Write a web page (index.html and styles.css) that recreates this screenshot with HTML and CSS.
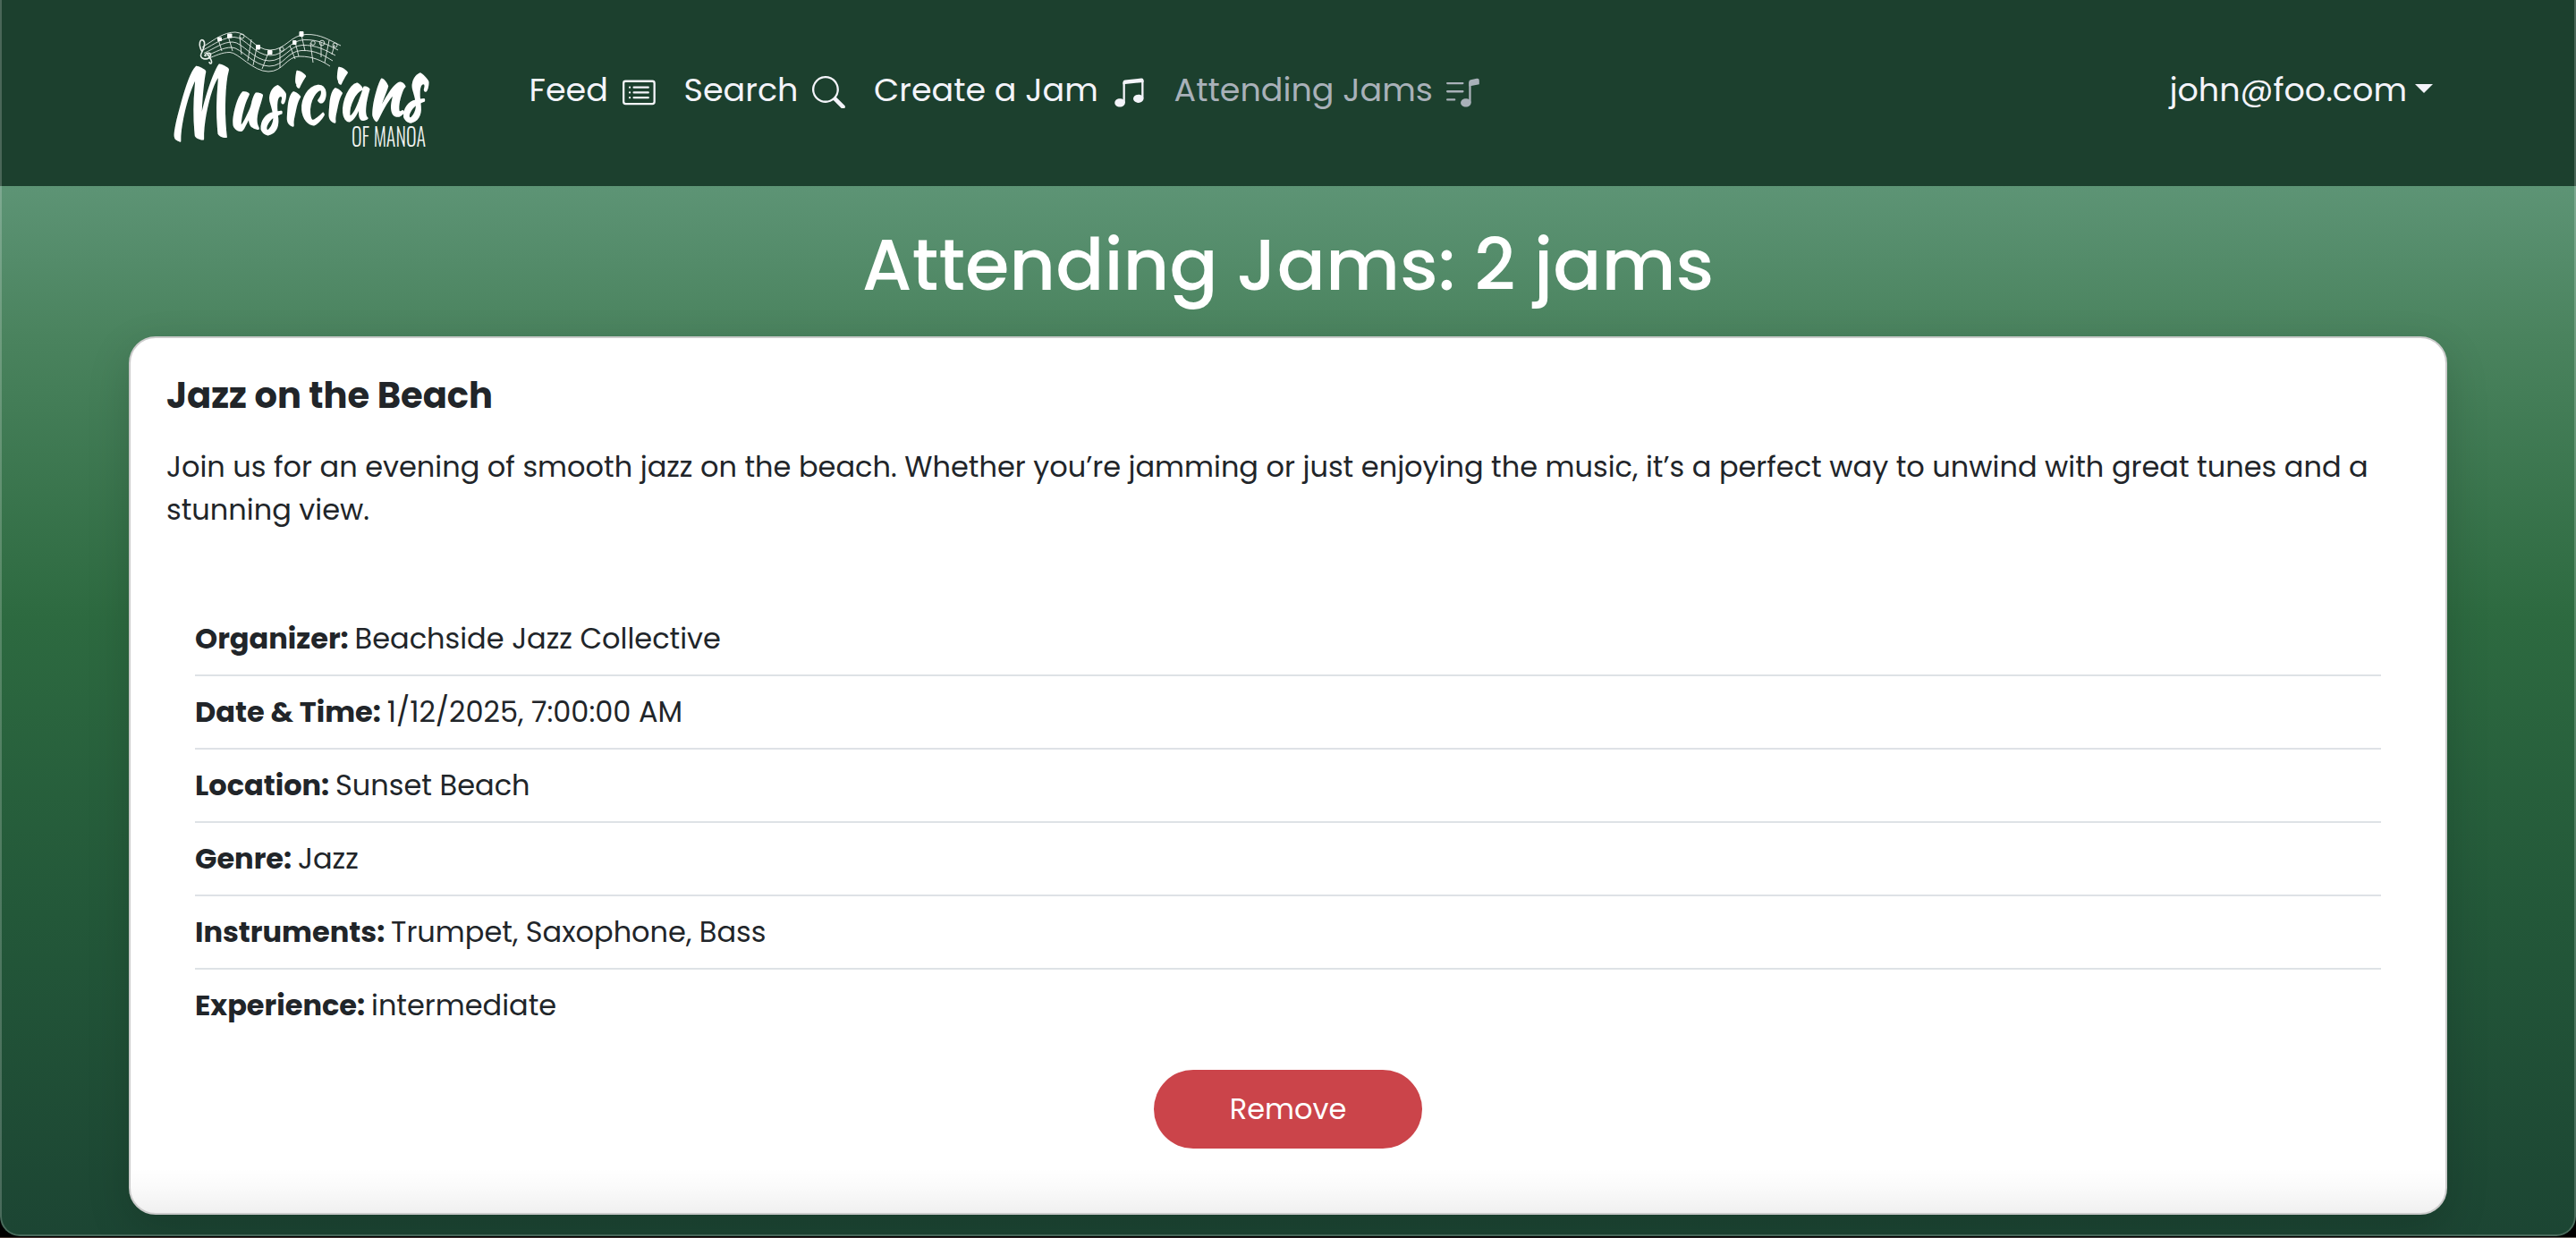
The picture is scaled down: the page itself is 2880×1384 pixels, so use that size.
FILE: index.html
```html
<!DOCTYPE html>
<html lang="en">
<head>
<meta charset="utf-8">
<title>Musicians of Manoa</title>
<link rel="stylesheet" href="styles.css">
</head>
<body>
<div class="window">
  <header class="navbar">
    <a class="brand" href="#">
      <svg class="logo" viewBox="0 0 360 180" role="img" aria-label="Musicians of Manoa">
        <g class="staff">
          <path d="M66 42C80 33 90 25 103 25S125 45 142 45S165 28 182 27.500S208 34 221 40"/>
          <path d="M67 45C80 38 90 30.500 102 30.500S125 51 142 51S164 34 180 33.500S206 39 218 45"/>
          <path d="M68 48.500C81 42.500 89 36 100 36S124 57 141 57S163 40 178 39.500S204 45 215 51"/>
          <path d="M69 52C82 47 89 42 99 42S124 63 141 63S161 46 177 45.500S202 51 212 57"/>
          <path d="M71 55C82 51 88 47.500 97 47.500S123 69 140 69S160 52 175 52S200 57 209 63"/>
          <path d="M84 33l4 13M95 29l5 17M108 30l2 20M121 33l-4 24M127 42l-4 20M140 48l-7 18M153 43v22M164 40l6 15M170 36l4 16M177 28l4 18M187 37l3 22M199 37v16M208 34l-5 25M214 39l-3 11"/>
          <circle cx="110.500" cy="29.500" r="2.500"/><circle cx="155" cy="44" r="2.300"/><circle cx="190" cy="37" r="2.300"/><circle cx="200" cy="37" r="2.800"/><circle cx="214.500" cy="39.500" r="2.500"/>
          <path class="clef" d="M66 47C61 38 64 32 67 34S68 43 65 49S72 57 75 52S69 47 69 52M72 49L76 56C78 61 74 61 74 58"/>
        </g>
        <g class="heads">
          <rect x="83" y="30.500" width="5" height="4.500" rx="1"/><rect x="94" y="26.500" width="5.500" height="5" rx="1"/><rect x="126" y="39" width="5" height="5.500" rx="1"/><rect x="139" y="45" width="5.500" height="5" rx="1"/><rect x="167" y="34" width="4.500" height="5" rx="1"/><rect x="174.500" y="24" width="5" height="6" rx="1"/>
        </g>
        <text class="word" transform="translate(32 140) rotate(-5)"><tspan class="cap" textLength="64" lengthAdjust="spacingAndGlyphs">M</tspan><tspan textLength="220" lengthAdjust="spacingAndGlyphs">usicians</tspan></text>
        <text class="sub" x="233" y="153" textLength="83" lengthAdjust="spacingAndGlyphs">OF MANOA</text>
      </svg>
    </a>
    <nav class="links">
      <a class="link" href="#">Feed
        <svg class="icon" viewBox="0 0 16 16"><path d="M14.500 3a.5.5 0 0 1 .5.5v9a.5.5 0 0 1-.5.5h-13a.5.5 0 0 1-.5-.5v-9a.5.5 0 0 1 .5-.5zm-13-1A1.500 1.500 0 0 0 0 3.500v9A1.500 1.500 0 0 0 1.500 14h13a1.500 1.500 0 0 0 1.500-1.500v-9A1.500 1.500 0 0 0 14.500 2z"/><path d="M5 8a.5.5 0 0 1 .5-.5h7a.5.5 0 0 1 0 1h-7A.5.5 0 0 1 5 8m0-2.500a.5.5 0 0 1 .5-.5h7a.5.5 0 0 1 0 1h-7a.5.5 0 0 1-.5-.5m0 5a.5.5 0 0 1 .5-.5h7a.5.5 0 0 1 0 1h-7a.5.5 0 0 1-.5-.5m-1-5a.5.5 0 1 1-1 0 .5.5 0 0 1 1 0M4 8a.5.5 0 1 1-1 0 .5.5 0 0 1 1 0m0 2.500a.5.5 0 1 1-1 0 .5.5 0 0 1 1 0"/></svg>
      </a>
      <a class="link" href="#">Search
        <svg class="icon" viewBox="0 0 16 16"><path d="M11.742 10.344a6.500 6.500 0 1 0-1.397 1.398h-.001q.044.06.098.115l3.850 3.850a1 1 0 0 0 1.415-1.414l-3.850-3.850a1 1 0 0 0-.115-.1zM12 6.500a5.500 5.500 0 1 1-11 0 5.500 5.500 0 0 1 11 0"/></svg>
      </a>
      <a class="link" href="#">Create a Jam
        <svg class="icon" viewBox="0 0 16 16"><path d="M6 13c0 1.105-1.120 2-2.500 2S1 14.105 1 13s1.120-2 2.500-2 2.500.896 2.500 2m9-2c0 1.105-1.120 2-2.500 2s-2.500-.895-2.500-2 1.120-2 2.500-2 2.500.895 2.500 2"/><path d="M14 11V2h1v9zM6 3v10H5V3z"/><path d="M5 2.905a1 1 0 0 1 .9-.995l8-.8a1 1 0 0 1 1.100.995V3L5 4z"/></svg>
      </a>
      <a class="link muted" href="#">Attending Jams
        <svg class="icon" viewBox="0 0 16 16"><path d="M12 13c0 1.105-1.120 2-2.500 2S7 14.105 7 13s1.120-2 2.500-2 2.500.895 2.500 2"/><path d="M12 3v10h-1V3z"/><path d="M11 2.820a1 1 0 0 1 .804-.98l3-.6A1 1 0 0 1 16 2.220V4l-5 1z"/><path d="M0 11.500a.5.5 0 0 1 .5-.5H4a.5.5 0 0 1 0 1H.5a.5.5 0 0 1-.5-.5m0-4A.5.5 0 0 1 .5 7H8a.5.5 0 0 1 0 1H.5a.5.5 0 0 1-.5-.5m0-4A.5.5 0 0 1 .5 3H8a.5.5 0 0 1 0 1H.5a.5.5 0 0 1-.5-.5"/></svg>
      </a>
    </nav>
    <a class="user" href="#">john@foo.com</a>
  </header>
  <main class="page">
    <h1 class="heading">Attending Jams: 2 jams</h1>
    <article class="card">
      <h2 class="title">Jazz on the Beach</h2>
      <p class="description">Join us for an evening of smooth jazz on the beach. Whether you’re jamming or just enjoying the music, it’s a perfect way to unwind with great tunes and a stunning view.</p>
      <ul class="details">
        <li><strong>Organizer:</strong> Beachside Jazz Collective</li>
        <li><strong>Date &amp; Time:</strong> 1/12/2025, 7:00:00 AM</li>
        <li><strong>Location:</strong> Sunset Beach</li>
        <li><strong>Genre:</strong> Jazz</li>
        <li><strong>Instruments:</strong> Trumpet, Saxophone, Bass</li>
        <li><strong>Experience:</strong> intermediate</li>
      </ul>
      <button class="remove" type="button">Remove</button>
    </article>
  </main>
</div>
</body>
</html>
```

FILE: styles.css
```css
* { box-sizing: border-box; }

body {
  margin: 0;
  height: 1384px;
  overflow: hidden;
  background: linear-gradient(#000 1383px, transparent 0), linear-gradient(90deg, #4a3a35, #2a2020 40%, #161212 60%, #6b6560);
  font-family: Poppins, Inter, sans-serif;
  font-size: 32px;
  line-height: 48px;
  color: #212529;
}

a { color: inherit; text-decoration: none; }

.window {
  position: relative;
  height: 1382px;
  overflow: hidden;
  border-radius: 0 0 22px 22px;
  background: linear-gradient(#5d9475 208px, #4a835e 376px, #2d6a40 690px, #235839 1020px, #1c4533 1382px);
}

/* hairline frame over the window edges */
.window::after {
  content: "";
  position: absolute;
  inset: 0;
  border: 2px solid rgba(255, 255, 255, .2);
  border-top: 0;
  border-radius: inherit;
  pointer-events: none;
}

.navbar {
  display: flex;
  align-items: center;
  height: 208px;
  padding: 0 160px 7px;
  background: #1c402e;
  color: #f4f4fa;
  font-size: 36.5px;
}

.brand { display: flex; }
.logo { width: 360px; height: 180px; overflow: visible; }
.staff { fill: none; stroke: #e9efeb; stroke-width: .9; }
.staff .clef { stroke-width: 1.6; }
.heads { fill: #fff; }
.word { font: 400 86px "Kaushan Script", "Caveat Brush", cursive; fill: #fff; stroke: #fff; stroke-width: 2px; stroke-linejoin: round; }
.word .cap { font-size: 100px; }
.sub { font: 300 28px Oswald, "Bebas Neue", "Roboto Condensed", Roboto, sans-serif; fill: #f0f4f2; }

.links { display: flex; gap: 31.9px; margin-left: 71.5px; }
.link { display: flex; align-items: center; gap: 16px; white-space: nowrap; }
.muted { color: #a9b1b9; }
.icon { width: 36.8px; height: 36.8px; margin-top: 5px; fill: currentColor; }
.muted .icon { margin-left: -1px; }

.user {
  display: flex;
  align-items: center;
  gap: 9px;
  margin-left: auto;
}
.user::after {
  content: "";
  margin-top: -3px;
  border: 10px solid transparent;
  border-top-color: currentColor;
  border-bottom: 0;
}

.page { padding: 40px 144px 0; }

.heading {
  margin: 0 0 32px;
  font-size: 80px;
  font-weight: 500;
  line-height: 96px;
  text-align: center;
  color: #fff;
}

.card {
  display: flex;
  flex-direction: column;
  padding: 40px 40px 72px;
  border: 2px solid #cbcbcb;
  border-radius: 30px;
  background: linear-gradient(transparent calc(100% - 50px), rgba(0, 0, 0, .018) calc(100% - 28px), rgba(0, 0, 0, .06)) #fff;
  box-shadow: 0 16px 48px rgba(0, 0, 0, .15);
}

.title { margin: 0 0 32px; font-size: 40px; font-weight: 700; line-height: 48px; }
.description { margin: 0 0 80px; }

.details { margin: 0 32px 32px; padding: 0; list-style: none; }
.details li { padding: 16px 0; border-bottom: 2px solid #dee2e6; }
.details li:last-child { border-bottom: 0; }
.details strong { margin-right: -1.7px; font-weight: 700; }

.remove {
  align-self: center;
  width: 300px;
  height: 88px;
  padding: 0;
  border: 0;
  border-radius: 44px;
  background: #cb444a;
  color: #fff;
  font: inherit;
}
```
